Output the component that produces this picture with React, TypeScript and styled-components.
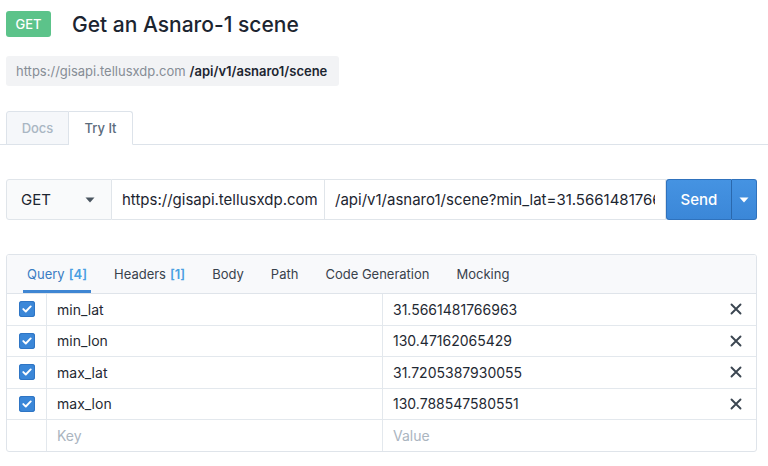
import React, { FC } from "react";
import styled, { createGlobalStyle } from "styled-components";

const GlobalStyle = createGlobalStyle`
  html, body {
    margin: 0;
    padding: 0;
    background: #fff;
  }
  body {
    font-family: Inter, "Noto Sans", "Liberation Sans", sans-serif;
    color: #1f2933;
  }
`;

interface Param {
  key: string;
  value: string;
}

const params: Param[] = [
  { key: "min_lat", value: "31.5661481766963" },
  { key: "min_lon", value: "130.47162065429" },
  { key: "max_lat", value: "31.7205387930055" },
  { key: "max_lon", value: "130.788547580551" }
];

const tabs = [
  { label: "Query", count: 4, active: true },
  { label: "Headers", count: 1 },
  { label: "Body" },
  { label: "Path" },
  { label: "Code Generation" },
  { label: "Mocking" }
];

const Caret: FC<{ color: string }> = ({ color }) => (
  <svg width="10" height="6" viewBox="0 0 10 6">
    <path d="M0.5 0.5h9L5 5.5z" fill={color} />
  </svg>
);

const Check: FC = () => (
  <CheckBox>
    <svg width="10" height="8" viewBox="0 0 10 8">
      <path
        d="M1.3 4.1l2.5 2.4L8.7 1.4"
        fill="none"
        stroke="#fff"
        strokeWidth="1.9"
        strokeLinecap="round"
        strokeLinejoin="round"
      />
    </svg>
  </CheckBox>
);

const Cross: FC = () => (
  <svg width="12" height="12" viewBox="0 0 12 12">
    <path
      d="M1.5 1.5l9 9M10.5 1.5l-9 9"
      stroke="#3a4550"
      strokeWidth="1.9"
      strokeLinecap="round"
    />
  </svg>
);

/**
 * Try It view of an API operation
 */
const App: FC = () => {
  return (
    <Page>
      <GlobalStyle />
      <Header>
        <MethodBadge>GET</MethodBadge>
        <Title>Get an Asnaro-1 scene</Title>
      </Header>
      <Endpoint>
        <Host>https://gisapi.tellusxdp.com</Host>
        <Path>/api/v1/asnaro1/scene</Path>
      </Endpoint>

      <PageTabs>
        <PageTab active={false}>Docs</PageTab>
        <PageTab active>Try It</PageTab>
      </PageTabs>

      <RequestBar>
        <MethodSelect>
          <span>GET</span>
          <Caret color="#4a5560" />
        </MethodSelect>
        <BaseUrl>https://gisapi.tellusxdp.com</BaseUrl>
        <PathInput>
          <PathText>/api/v1/asnaro1/scene?min_lat=31.5661481766963&amp;min_lon=130.47162065429</PathText>
        </PathInput>
        <SendButton>Send</SendButton>
        <SendMenu>
          <Caret color="#fff" />
        </SendMenu>
      </RequestBar>

      <Panel>
        <PanelTabs>
          {tabs.map(t => (
            <PanelTab key={t.label} active={!!t.active}>
              {t.label}
              {t.count !== undefined && <Count>[{t.count}]</Count>}
            </PanelTab>
          ))}
        </PanelTabs>
        {params.map(p => (
          <Row key={p.key}>
            <Cell>
              <Check />
            </Cell>
            <TextCell>{p.key}</TextCell>
            <TextCell>{p.value}</TextCell>
            <Cell>
              <Cross />
            </Cell>
          </Row>
        ))}
        <Row>
          <Cell />
          <TextCell placeholder>Key</TextCell>
          <TextCell placeholder>Value</TextCell>
          <Cell />
        </Row>
      </Panel>
    </Page>
  );
};

export default App;

const Page = styled.div`
  width: 768px;
  height: 466px;
  overflow: hidden;
  padding-top: 11px;
  box-sizing: border-box;
`;

const Header = styled.div`
  display: flex;
  align-items: center;
  gap: 21px;
  padding-left: 6px;
`;

const MethodBadge = styled.div`
  width: 45px;
  height: 26px;
  display: flex;
  align-items: center;
  justify-content: center;
  background: #5cc38a;
  color: #fff;
  font-size: 13px;
  font-weight: 500;
  border-radius: 3px;
`;

const Title = styled.h1`
  margin: 0;
  font-size: 21px;
  font-weight: 500;
  color: #1c2530;
`;

const Endpoint = styled.div`
  display: inline-flex;
  align-items: center;
  gap: 4px;
  margin: 19px 0 0 6px;
  height: 30px;
  padding: 0 12px 0 10px;
  background: #f2f3f5;
  border-radius: 3px;
  font-size: 13px;
`;

const Host = styled.span`
  color: #868d95;
`;

const Path = styled.span`
  color: #1c2530;
  font-weight: 600;
`;

const PageTabs = styled.div`
  display: flex;
  align-items: flex-end;
  margin-top: 25px;
  padding-left: 6px;
  height: 33px;
  border-bottom: 1px solid #dde3ea;
`;

const PageTab = styled.div<{ active: boolean }>`
  width: ${p => (p.active ? "64px" : "63px")};
  box-sizing: border-box;
  display: flex;
  align-items: center;
  justify-content: center;
  margin-bottom: -1px;
  height: 34px;
  font-size: 13px;
  font-weight: 500;
  border: 1px solid #dde3ea;
  border-left-width: ${p => (p.active ? "0" : "1px")};
  border-bottom-color: ${p => (p.active ? "#fff" : "#dde3ea")};
  border-radius: ${p => (p.active ? "0 3px 0 0" : "3px 0 0 0")};
  background: ${p => (p.active ? "#fff" : "#f5f7fa")};
  color: ${p => (p.active ? "#5b6b7c" : "#a9b6c3")};
`;

const RequestBar = styled.div`
  display: flex;
  margin: 34px 11px 0 6px;
  height: 41px;
  font-size: 15px;
`;

const Field = styled.div`
  display: flex;
  align-items: center;
  box-sizing: border-box;
  height: 41px;
  border: 1px solid #e0e5ea;
  border-left-width: 0;
  background: #fff;
  color: #1c2530;
  white-space: nowrap;
  overflow: hidden;
`;

const MethodSelect = styled(Field)`
  width: 106px;
  flex: none;
  justify-content: space-between;
  padding: 0 16px 0 14px;
  border-left-width: 1px;
  border-radius: 3px 0 0 3px;
  background: #f9fafb;
`;

const BaseUrl = styled(Field)`
  width: 213px;
  flex: none;
  padding-left: 10px;
`;

const PathInput = styled(Field)`
  flex: 1;
  min-width: 0;
  padding-left: 10px;
  padding-right: 10px;
`;

const PathText = styled.span`
  display: block;
  min-width: 0;
  overflow: hidden;
  text-overflow: clip;
`;

const SendButton = styled.div`
  width: 66px;
  flex: none;
  box-sizing: border-box;
  display: flex;
  align-items: center;
  justify-content: center;
  background: linear-gradient(#4593e2, #3b87d8);
  border: 1px solid #2f72bd;
  border-right-color: #2a68ad;
  border-radius: 3px 0 0 3px;
  color: #fff;
  font-weight: 500;
`;

const SendMenu = styled.div`
  width: 25px;
  flex: none;
  box-sizing: border-box;
  display: flex;
  align-items: center;
  justify-content: center;
  background: linear-gradient(#4593e2, #3b87d8);
  border: 1px solid #2f72bd;
  border-left: 0;
  border-radius: 0 3px 3px 0;
`;

const Panel = styled.div`
  margin: 34px 11px 0 6px;
  border: 1px solid #dfe4ea;
  border-radius: 3px;
  overflow: hidden;
`;

const PanelTabs = styled.div`
  display: flex;
  gap: 19px;
  height: 38px;
  padding-left: 16px;
  background: #f8f9fb;
  border-bottom: 1px solid #dfe4ea;
`;

const PanelTab = styled.div<{ active: boolean }>`
  display: flex;
  align-items: center;
  gap: 4px;
  padding: 0 4px;
  font-size: 13px;
  color: ${p => (p.active ? "#3a7cc3" : "#38424c")};
  box-shadow: ${p => (p.active ? "inset 0 -3px 0 #3f86d3" : "none")};
`;

const Count = styled.span`
  color: #4aa0e2;
  font-weight: 600;
`;

const Row = styled.div`
  display: grid;
  grid-template-columns: 39px 336px 1fr 40px;
  height: 30.5px;
  border-bottom: 1px solid #e3e8ed;

  &:last-child {
    border-bottom: 0;
  }
`;

const Cell = styled.div`
  display: flex;
  align-items: center;
  justify-content: center;

  & + & {
    border-left: 1px solid #e3e8ed;
  }
`;

const TextCell = styled.div<{ placeholder?: boolean }>`
  display: flex;
  align-items: center;
  padding-left: 10px;
  border-left: 1px solid #e3e8ed;
  font-size: 14px;
  color: ${p => (p.placeholder ? "#abb5bf" : "#1f2933")};
`;

const CheckBox = styled.div`
  width: 16px;
  height: 16px;
  display: flex;
  align-items: center;
  justify-content: center;
  border-radius: 3px;
  background: #3b87d8;
  box-shadow: inset 0 0 0 1px #2f75c4;
`;
